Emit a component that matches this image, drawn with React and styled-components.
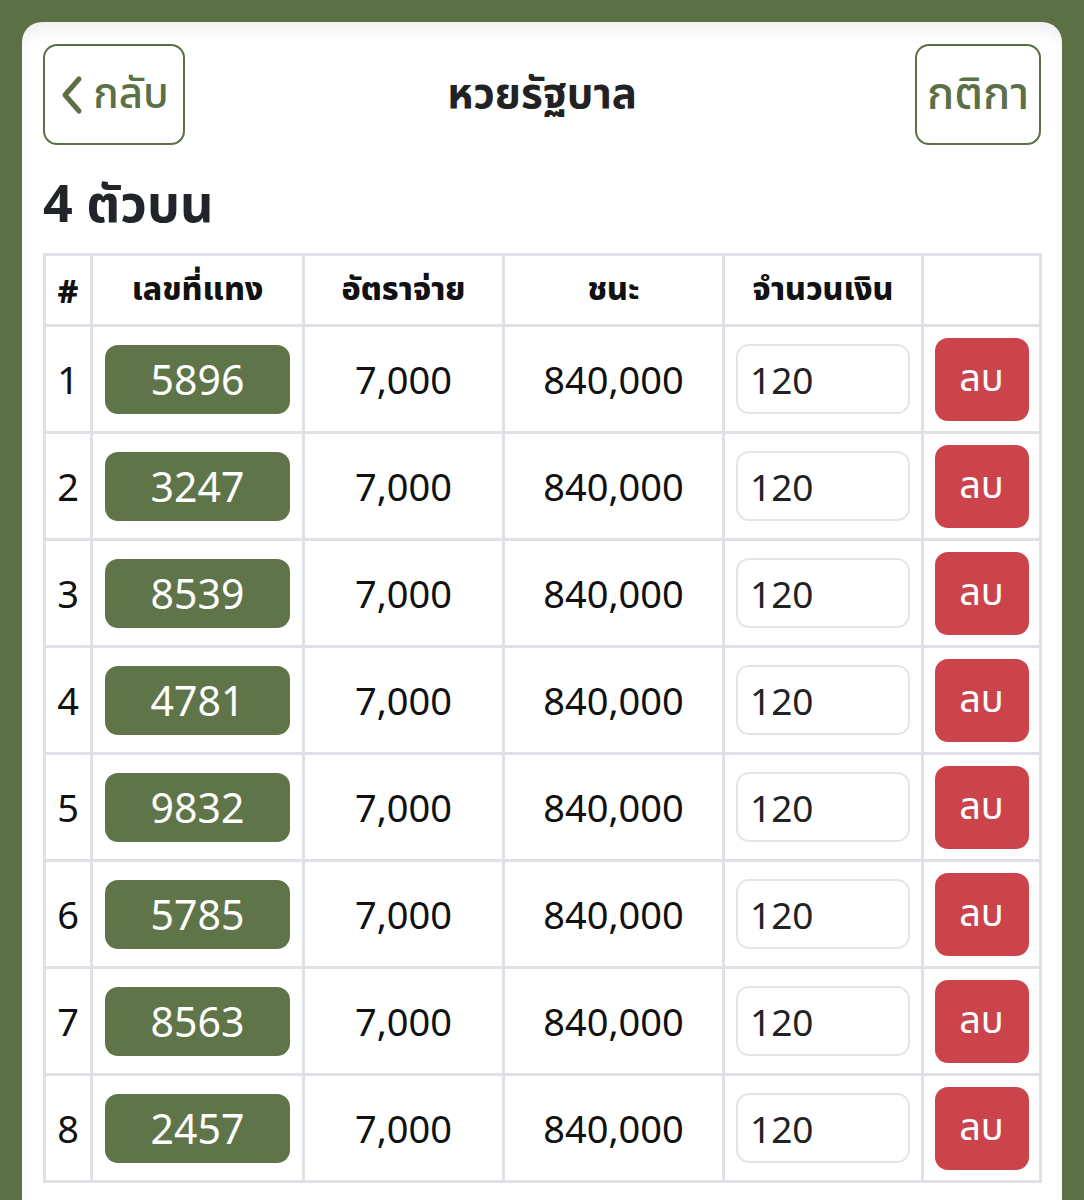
import React from "react";
import styled, { createGlobalStyle } from "styled-components";

const GlobalStyle = createGlobalStyle`
  body {
    margin: 0;
    background: #5c7046;
    font-family: "Noto Sans", "Noto Sans Thai", "Open Sans", sans-serif;
  }
`;

const bets = [
  { no: "5896" },
  { no: "3247" },
  { no: "8539" },
  { no: "4781" },
  { no: "9832" },
  { no: "5785" },
  { no: "8563" },
  { no: "2457" },
];

const App = () => {
  return (
    <>
      <GlobalStyle />
      <Page>
        <Card>
          <TopBar>
            <OutlineButton $wide>
              <svg width="26" height="40" viewBox="0 0 26 40">
                <path
                  d="M20 4 L6 20 L20 36"
                  fill="none"
                  stroke="#5c7046"
                  strokeWidth="5"
                  strokeLinecap="round"
                  strokeLinejoin="round"
                />
              </svg>
              กลับ
            </OutlineButton>
            <PageTitle>หวยรัฐบาล</PageTitle>
            <OutlineButton $right>กติกา</OutlineButton>
          </TopBar>
          <Section>4 ตัวบน</Section>
          <Table>
            <colgroup>
              <col style={{ width: 47 }} />
              <col style={{ width: 212 }} />
              <col style={{ width: 200 }} />
              <col style={{ width: 220 }} />
              <col style={{ width: 199 }} />
              <col style={{ width: 118 }} />
            </colgroup>
            <thead>
              <tr>
                <Th>#</Th>
                <Th>เลขที่แทง</Th>
                <Th>อัตราจ่าย</Th>
                <Th>ชนะ</Th>
                <Th>จำนวนเงิน</Th>
                <Th />
              </tr>
            </thead>
            <tbody>
              {bets.map((b, i) => (
                <tr key={i}>
                  <Td>{i + 1}</Td>
                  <Td>
                    <NumberBadge>{b.no}</NumberBadge>
                  </Td>
                  <Td>7,000</Td>
                  <Td>840,000</Td>
                  <Td>
                    <AmountInput defaultValue="120" />
                  </Td>
                  <Td>
                    <DeleteButton>ลบ</DeleteButton>
                  </Td>
                </tr>
              ))}
            </tbody>
          </Table>
        </Card>
      </Page>
    </>
  );
};

const Page = styled.div`
  padding: 22px 22px 0;
  min-height: 1200px;
  box-sizing: border-box;
`;

const Card = styled.div`
  background: #fff;
  border-radius: 20px 20px 0 0;
  padding: 22px 21px 40px;
  min-height: 1178px;
  box-sizing: border-box;
  box-shadow: inset 0 14px 22px -12px rgba(0, 0, 0, 0.1);
`;

const TopBar = styled.div`
  display: grid;
  grid-template-columns: 1fr auto 1fr;
  align-items: center;
`;

const OutlineButton = styled.button`
  justify-self: ${(p) => (p.$right ? "end" : "start")};
  height: 101px;
  width: ${(p) => (p.$wide ? "142px" : "126px")};
  padding: 0;
  display: flex;
  align-items: center;
  justify-content: center;
  gap: 8px;
  background: #fff;
  border: 2.5px solid #5c7046;
  border-radius: 14px;
  color: #5c7046;
  font-family: inherit;
  font-size: ${(p) => (p.$wide ? "42px" : "45px")};
  font-weight: 500;
`;

const PageTitle = styled.h1`
  margin: 0;
  font-size: 42px;
  font-weight: 700;
  color: #222;
`;

const Section = styled.h2`
  margin: 26px 0 20px;
  font-size: 52px;
  font-weight: 700;
  color: #212529;
  line-height: 62px;
`;

const Table = styled.table`
  width: 996px;
  border-collapse: collapse;
  table-layout: fixed;
  color: #111;
`;

const Th = styled.th`
  height: 68px;
  border: 3px solid #dfe1e6;
  font-size: 32px;
  font-weight: 800;
  text-align: center;
  color: #111;
  padding: 0;
`;

const Td = styled.td`
  height: 104px;
  border: 3px solid #dfe1e6;
  font-size: 38px;
  text-align: center;
  padding: 0 8px;
  &:first-child {
    padding: 0;
  }
`;

const NumberBadge = styled.span`
  display: inline-block;
  padding: 0 46px;
  height: 69px;
  line-height: 69px;
  background: #5f7549;
  color: #fff;
  border-radius: 13px;
  font-size: 41px;
`;

const AmountInput = styled.input`
  width: 174px;
  height: 70px;
  box-sizing: border-box;
  border: 2px solid #e4e5e8;
  border-radius: 13px;
  padding: 0 12px;
  font-family: inherit;
  font-size: 37px;
  color: #222;
  outline: none;
`;

const DeleteButton = styled.button`
  width: 94px;
  height: 83px;
  background: #cc444b;
  border: none;
  border-radius: 13px;
  color: #fff;
  font-family: inherit;
  font-size: 38px;
`;

export default App;
